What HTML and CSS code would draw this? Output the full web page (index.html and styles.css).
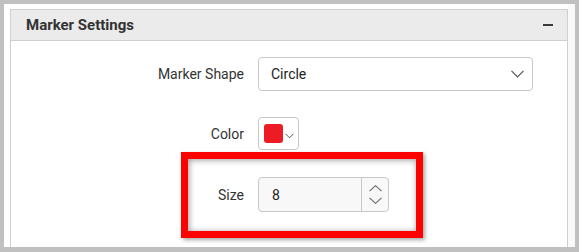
FILE: index.html
```html
<!DOCTYPE html>
<html lang="en">
<head>
    <meta charset="UTF-8">
    <title>Marker Settings</title>
    <link rel="stylesheet" href="styles.css">
</head>
<body>
    <div class="frame">
        <div class="panel-wrap">
            <div class="panel">
                <div class="panel-header">
                    <span class="panel-title">Marker Settings</span>
                    <span class="collapse"></span>
                </div>
                <div class="panel-body">
                    <div class="row">
                        <label class="row-label">Marker Shape</label>
                        <div class="dropdown">
                            <span>Circle</span>
                            <svg class="chevron" width="13" height="8" viewBox="0 0 13 8">
                                <path d="M0.5 0.8 L6.5 6.8 L12.5 0.8" fill="none" stroke="#555" stroke-width="1.2"/>
                            </svg>
                        </div>
                    </div>
                    <div class="row row-color">
                        <label class="row-label">Color</label>
                        <div class="color-picker">
                            <span class="swatch"></span>
                            <svg class="chevron-small" width="9" height="6" viewBox="0 0 9 6">
                                <path d="M0.5 0.8 L4.5 4.8 L8.5 0.8" fill="none" stroke="#555" stroke-width="1"/>
                            </svg>
                        </div>
                    </div>
                    <div class="row row-size">
                        <label class="row-label">Size</label>
                        <div class="numeric">
                            <span class="numeric-value">8</span>
                            <div class="spin">
                                <svg width="13" height="7" viewBox="0 0 13 7">
                                    <path d="M0.5 6.2 L6.5 0.7 L12.5 6.2" fill="none" stroke="#666" stroke-width="1.1"/>
                                </svg>
                                <svg width="13" height="7" viewBox="0 0 13 7">
                                    <path d="M0.5 0.8 L6.5 6.3 L12.5 0.8" fill="none" stroke="#666" stroke-width="1.1"/>
                                </svg>
                            </div>
                        </div>
                    </div>
                    <!-- highlight drawn over the size row -->
                    <div class="highlight"></div>
                </div>
            </div>
        </div>
        <div class="strip"></div>
    </div>
</body>
</html>
```

FILE: styles.css
```css
body {
    margin: 0;
    background-color: #c0c0c0;
    font-family: Roboto, "Liberation Sans", Arial, sans-serif;
    color: #333;
    overflow: hidden;
    height: 252px;
}
.frame {
    display: flex;
    margin: 4px 4px 0;
    height: 243px;
    background-color: #fff;
    overflow: hidden;
}
.panel-wrap {
    flex: 1;
    padding: 5px 0 0 6px;
}
.strip {
    width: 7px;
    background-color: #f9f9f9;
}
.panel {
    border: 1px solid #cfcfcf;
    border-bottom: none;
    height: 100%;
    box-sizing: border-box;
}
.panel-header {
    display: flex;
    align-items: center;
    justify-content: space-between;
    height: 30px;
    padding: 0 14px 0 15px;
    background-color: #ebebeb;
    border-bottom: 1px solid #cfcfcf;
}
.panel-title {
    font-size: 15px;
    font-weight: bold;
    color: #333;
}
.collapse {
    width: 10px;
    height: 2px;
    background-color: #3a3a3a;
}
.panel-body {
    position: relative;
    padding-top: 16px;
}
.row {
    display: flex;
    align-items: center;
}
.row-color {
    margin-top: 26px;
}
.row-size {
    margin-top: 27px;
}
.row-label {
    width: 233px;
    margin-right: 14px;
    text-align: right;
    font-size: 14px;
    color: #333;
}
.dropdown {
    display: flex;
    align-items: center;
    justify-content: space-between;
    width: 275px;
    height: 34px;
    padding: 0 8px 0 12px;
    box-sizing: border-box;
    border: 1px solid #c8c8c8;
    border-radius: 4px;
    font-size: 14px;
    color: #222;
}
.chevron {
    display: block;
}
.color-picker {
    display: flex;
    align-items: center;
    width: 41px;
    height: 33px;
    padding-left: 5px;
    box-sizing: border-box;
    border: 1px solid #c8c8c8;
    border-radius: 4px;
}
.swatch {
    width: 19px;
    height: 19px;
    border-radius: 3px;
    background-color: #ed1c24;
}
.chevron-small {
    display: block;
    margin: 4px 0 0 2px;
}
.numeric {
    display: flex;
    width: 131px;
    height: 35px;
    box-sizing: border-box;
    border: 1px solid #c8c8c8;
    border-radius: 4px;
    background-color: #f8f8f8;
}
.numeric-value {
    flex: 1;
    display: flex;
    align-items: center;
    padding-left: 13px;
    font-size: 14px;
    color: #222;
}
.spin {
    width: 26px;
    display: flex;
    flex-direction: column;
    align-items: center;
    justify-content: center;
    gap: 5px;
    border-left: 1px solid #c8c8c8;
}
.spin svg {
    display: block;
}
.highlight {
    position: absolute;
    left: 170px;
    top: 111px;
    width: 242px;
    height: 86px;
    box-sizing: border-box;
    border: 7px solid #ff0000;
    box-shadow: 2px 2px 4px rgba(0, 0, 0, 0.35), inset 1px 1px 6px rgba(0, 0, 0, 0.4);
}
```
